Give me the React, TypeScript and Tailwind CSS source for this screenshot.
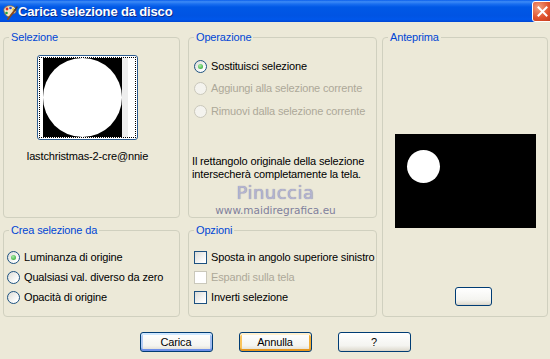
import React from 'react'
import clsx from 'clsx'

const Radio = ({ checked, disabled }: { checked?: boolean; disabled?: boolean }) => (
  <span
    className={clsx(
      'w-[13px] h-[13px] rounded-full border flex items-center justify-center shrink-0',
      disabled
        ? 'border-[#CAC8BB] bg-[#F4F3EE]'
        : 'border-[#1C5180] bg-[linear-gradient(135deg,#DCDCD7,#FFFFFF_80%)]'
    )}
  >
    {checked && (
      <span className="w-[5px] h-[5px] rounded-full bg-[radial-gradient(circle_at_40%_35%,#A8EBA8,#21A121)]" />
    )}
  </span>
)

const Checkbox = ({ disabled }: { disabled?: boolean }) => (
  <span
    className={clsx(
      'w-[13px] h-[13px] border shrink-0',
      disabled
        ? 'border-[#CAC8BB] bg-white'
        : 'border-[#1C5180] bg-[linear-gradient(135deg,#DCDCD7,#FFFFFF_85%)]'
    )}
  />
)

const XPButton = ({
  children,
  variant,
  className,
}: {
  children?: React.ReactNode
  variant?: 'default' | 'hot'
  className?: string
}) => (
  <button
    type="button"
    className={clsx(
      'h-[20px] w-[73px] rounded-[3px] border border-[#003C74] bg-[linear-gradient(to_bottom,#FFFFFF,#F4F4F0_70%,#E3E0D6_92%,#D6D0C5)] text-[11px] leading-none text-black',
      variant === 'default' &&
        'shadow-[inset_0_2px_0_#CEE7FF,inset_0_-2px_0_#6D8FE9,inset_2px_0_0_#B4CCF4,inset_-2px_0_0_#A2BDF0]',
      variant === 'hot' &&
        'shadow-[inset_0_2px_0_#FFF0CF,inset_0_-2px_0_#E5971F,inset_2px_0_0_#F9C45C,inset_-2px_0_0_#F3AE37]',
      className
    )}
  >
    {children}
  </button>
)

const Group = ({
  title,
  className,
  children,
}: {
  title: string
  className?: string
  children?: React.ReactNode
}) => (
  <fieldset className={clsx('border border-[#D0D0BF] rounded-[4px] min-w-0 h-full', className)}>
    <legend className="ml-[5px] px-[2px] text-[#0046D5] leading-[13px]">{title}</legend>
    {children}
  </fieldset>
)

const AppIcon = () => (
  <svg width="16" height="16" viewBox="0 0 16 16">
    <path d="M2 7 C1 3 6 1 10 2 C14 3 15 7 13 9 C11 10 10 9 9 11 C8 14 3 13 2 7 Z" fill="#F3E6C4" stroke="#8A6A3A" strokeWidth="0.8" />
    <circle cx="5" cy="5" r="1.4" fill="#E03020" />
    <circle cx="8.5" cy="4" r="1.3" fill="#2050E0" />
    <circle cx="11.5" cy="5.5" r="1.2" fill="#F0C020" />
    <circle cx="4.5" cy="9" r="1.3" fill="#20A040" />
    <path d="M6 15 L13 6" stroke="#8A4A20" strokeWidth="2" strokeLinecap="round" />
    <path d="M13 6 L15 3" stroke="#404040" strokeWidth="1.5" strokeLinecap="round" />
  </svg>
)

const TitleBar = () => (
  <div className="h-[22px] shrink-0 flex items-center bg-[linear-gradient(to_bottom,#0A5EEB_0%,#3D8BF6_8%,#1A6FF0_18%,#0058E6_32%,#0054E3_72%,#0057EA_88%,#0046D4_100%)]">
    <span className="ml-[2px] mt-[1px]">
      <AppIcon />
    </span>
    <span className="text-white font-bold text-[13px] leading-none [text-shadow:1px_1px_0_#0A2A8A]">
      Carica selezione da disco
    </span>
    <span className="ml-auto mr-[-3px] mt-[1px] w-[21px] h-[21px] rounded-[3px] border border-white bg-[radial-gradient(circle_at_30%_30%,#F0A080,#E0522D_55%,#C03A1C)] flex items-center justify-center">
      <svg width="11" height="11" viewBox="0 0 11 11">
        <path d="M1.5 1.5 L9.5 9.5 M9.5 1.5 L1.5 9.5" stroke="white" strokeWidth="2" strokeLinecap="square" />
      </svg>
    </span>
  </div>
)

export default function App() {
  return (
    <div className="w-[550px] h-[359px] overflow-hidden bg-[#ECE9D8] flex flex-col font-['Liberation_Sans',Arial,sans-serif] text-[11px] tracking-[-0.15px] text-black whitespace-nowrap">
      <TitleBar />

      <div className="flex pl-[3px] pt-[9px]">
        <div className="grid grid-cols-[177px_189px] grid-rows-[187px_93px] gap-x-[8px] gap-y-[6px]">
          {/* Selezione */}
          <Group title="Selezione">
            <div className="flex flex-col items-center pt-[11px] pr-[8px]">
              <div className="w-[101px] h-[85px] rounded-[3px] border border-[#2C5B8F] bg-white p-[1px]">
                <div className="w-full h-full border border-dotted border-black flex pl-[3px]">
                  <div className="w-[79px] h-[79px] bg-black flex items-center justify-center">
                    <div className="w-[79px] h-[79px] rounded-full bg-white" />
                  </div>
                  <div className="w-[6px] h-full bg-[#EEEEEE]" />
                </div>
              </div>
              <p className="mt-[10px] leading-[13px]">lastchristmas-2-cre@nnie</p>
            </div>
          </Group>

          {/* Operazione */}
          <Group title="Operazione">
            <div className="flex flex-col pt-[11px]">
              <label className="h-[22px] pl-[5px] flex items-center gap-[4px]">
                <Radio checked />
                <span>Sostituisci selezione</span>
              </label>
              <label className="h-[23px] pl-[5px] flex items-center gap-[4px] text-[#ACA899]">
                <Radio disabled />
                <span>Aggiungi alla selezione corrente</span>
              </label>
              <label className="h-[22px] pl-[5px] flex items-center gap-[4px] text-[#ACA899]">
                <Radio disabled />
                <span>Rimuovi dalla selezione corrente</span>
              </label>
              <p className="mt-[33px] pl-[3px] leading-[13px]">
                Il rettangolo originale della selezione
                <br />
                intersecherà completamente la tela.
              </p>
              <div className="flex flex-col items-center pr-[14px]">
                <span className="mt-[2px] font-['DejaVu_Sans',sans-serif] text-[18px] leading-[20px] tracking-[0.5px] text-[#B4B4D0] [text-shadow:0_0_1px_#7A7AA0]">
                  Pinuccia
                </span>
                <span className="font-['DejaVu_Sans',sans-serif] text-[10.5px] leading-[14px] tracking-[0px] text-[#80809C]">
                  www.maidiregrafica.eu
                </span>
              </div>
            </div>
          </Group>

          {/* Crea selezione da */}
          <Group title="Crea selezione da">
            <div className="flex flex-col pt-[10px] pl-[3px]">
              <label className="h-[20px] flex items-center gap-[4px]">
                <Radio checked />
                <span>Luminanza di origine</span>
              </label>
              <label className="h-[20px] flex items-center gap-[4px]">
                <Radio />
                <span>Qualsiasi val. diverso da zero</span>
              </label>
              <label className="h-[20px] flex items-center gap-[4px]">
                <Radio />
                <span>Opacità di origine</span>
              </label>
            </div>
          </Group>

          {/* Opzioni */}
          <Group title="Opzioni">
            <div className="flex flex-col pt-[10px] pl-[5px]">
              <label className="h-[20px] flex items-center gap-[4px]">
                <Checkbox />
                <span>Sposta in angolo superiore sinistro</span>
              </label>
              <label className="h-[20px] flex items-center gap-[4px] text-[#ACA899]">
                <Checkbox disabled />
                <span>Espandi sulla tela</span>
              </label>
              <label className="h-[20px] flex items-center gap-[4px]">
                <Checkbox />
                <span>Inverti selezione</span>
              </label>
            </div>
          </Group>
        </div>

        {/* Anteprima */}
        <div className="ml-[5px] w-[166px] h-[286px]">
          <Group title="Anteprima">
            <div className="flex flex-col items-center">
              <div className="mt-[90px] w-[141px] h-[94px] bg-black pl-[12px] pt-[16px]">
                <div className="w-[33px] h-[33px] rounded-full bg-white" />
              </div>
              <XPButton className="mt-[59px] ml-[17px] !w-[37px] !h-[19px]" />
            </div>
          </Group>
        </div>
      </div>

      <div className="flex justify-center gap-[26px] mt-[15px]">
        <XPButton variant="default">Carica</XPButton>
        <XPButton variant="hot">Annulla</XPButton>
        <XPButton>?</XPButton>
      </div>
    </div>
  )
}
